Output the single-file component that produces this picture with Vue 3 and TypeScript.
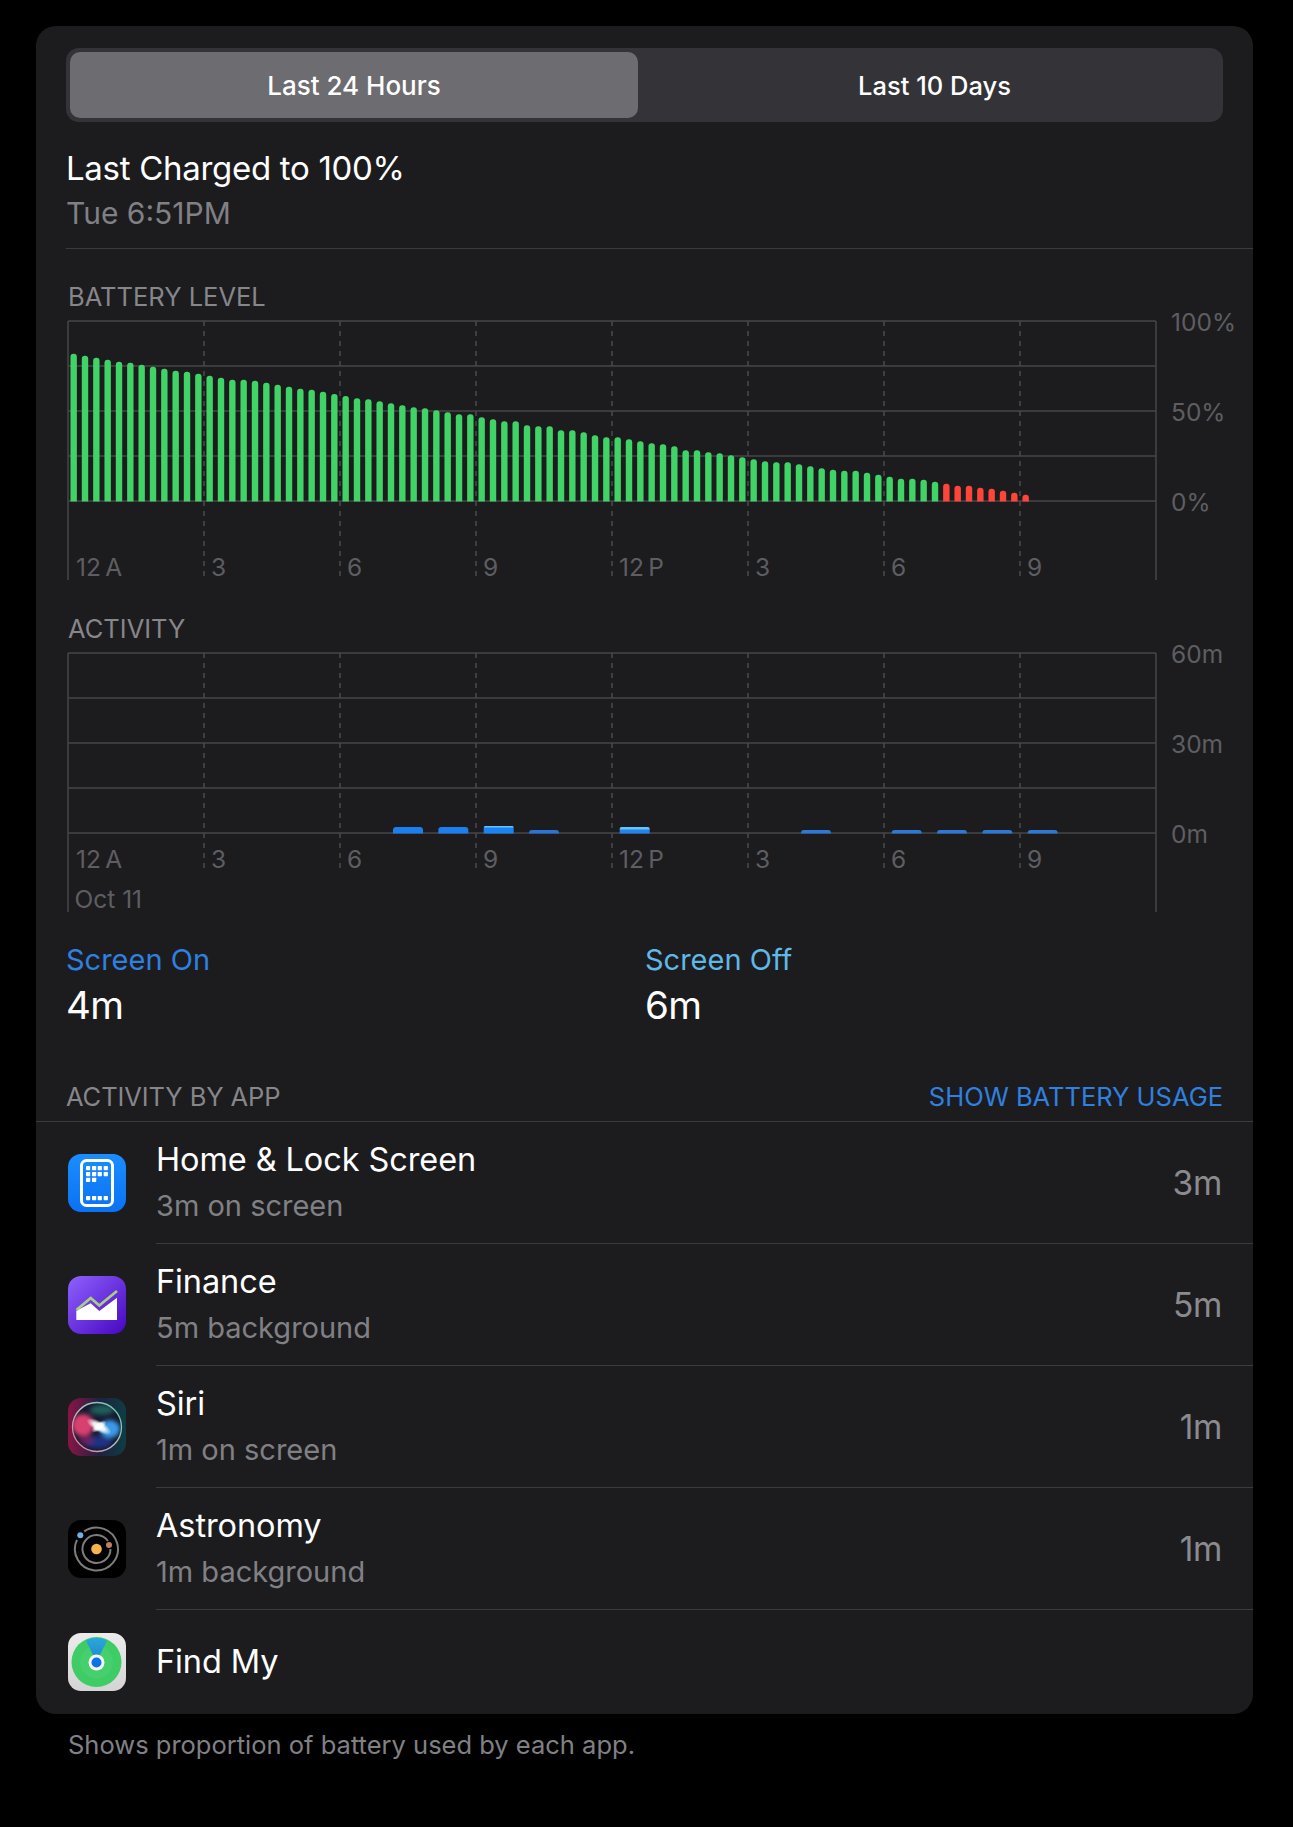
<script setup lang="ts">
interface Bar { x: number; w: number; h: number; fill: string; off: number }
interface Chart {
  label: string
  yLabels: { text: string; line: number }[]
  xLabels: { text: string; x: number }[]
  note?: string
  labelY: number
  dashEnd: number
  bars: Bar[]
}

const ORIGIN_X = 2
const TOP = 15
const STEP = 45
const BASE = TOP + STEP * 4
const COL = 136

const levels = [
  147.7, 145.7, 143.7, 141.7, 139.7, 138.7, 136.7, 134.7, 132.7, 130.7, 129.7, 127.7, 125.7, 123.7, 121.7,
  121.7, 120.7, 118.7, 116.7, 114.7, 112.7, 111.7, 109.7, 107.5, 105.5, 103.3, 102.3, 100.3, 98.3, 96.3,
  94.3, 93.3, 91.3, 89.3, 87.3, 87.3, 84.3, 82.3, 80.3, 80.3, 76.3, 75.3, 75.3, 71.3, 71.3,
  69.3, 66.3, 64.3, 64.3, 62.3, 60.3, 58.3, 57.3, 55.3, 51.3, 51.3, 49.3, 48.3, 46.3, 44.3,
  42.3, 40.3, 39.3, 39.3, 37.3, 35.3, 33.3, 31.7, 30.7, 30.7, 28.7, 26.7, 24.7, 22.7, 22.7,
  21.7, 19.7, 17.7, 15.7, 15.7, 13.7, 12.7, 10.7, 8.7, 6.7
]

const batteryBars: Bar[] = levels.map((h, i) => ({
  x: ORIGIN_X + (COL / 12) * i + 2.47,
  w: 6.4,
  h,
  fill: i >= 77 ? '#ff453a' : '#40d366',
  off: 0
}))

const activity: [number, number, string, number][] = [
  [7, 6.5, '#1b7ff0', 0],
  [8, 6.5, '#1b7ff0', 0],
  [9, 7.5, '#1b84f5', 1.5],
  [10, 3.5, '#2a74d4', 0],
  [12, 6.5, '#2484ea', 2.5],
  [16, 3.5, '#2f78d6', 0],
  [18, 3.5, '#2f78d6', 0],
  [19, 3.5, '#2f78d6', 0],
  [20, 3.5, '#2f78d6', 0],
  [21, 3.5, '#2f78d6', 0]
]

const activityBars: Bar[] = activity.map(([i, h, fill, off]) => ({
  x: ORIGIN_X + (COL / 3) * i + 7.67,
  w: 30,
  h,
  fill,
  off
}))

const hours = ['12\u2009A', '3', '6', '9', '12\u2009P', '3', '6', '9']
const xLabels = hours.map((text, i) => ({ text, x: ORIGIN_X + COL * i + (i === 0 ? 8 : 7) }))
const verticals = hours.map((_, i) => ORIGIN_X + COL * i).slice(1)
const rightEdge = ORIGIN_X + COL * 8

const charts: Chart[] = [
  {
    label: 'BATTERY LEVEL',
    yLabels: [
      { text: '100%', line: 0 },
      { text: '50%', line: 2 },
      { text: '0%', line: 4 }
    ],
    xLabels,
    labelY: 270,
    dashEnd: 271,
    bars: batteryBars
  },
  {
    label: 'ACTIVITY',
    yLabels: [
      { text: '60m', line: 0 },
      { text: '30m', line: 2 },
      { text: '0m', line: 4 }
    ],
    xLabels,
    note: 'Oct 11',
    labelY: 230,
    dashEnd: 230,
    bars: activityBars
  }
]

function topRounded(x: number, w: number, h: number, base: number, maxR: number): string {
  const r = Math.min(maxR, h)
  const y = base - h
  return `M${x} ${base}V${y + r}A${r} ${r} 0 0 1 ${x + r} ${y}H${x + w - r}A${r} ${r} 0 0 1 ${x + w} ${y + r}V${base}Z`
}

const apps = [
  { name: 'Home & Lock Screen', sub: '3m on screen', time: '3m', icon: 'home' },
  { name: 'Finance', sub: '5m background', time: '5m', icon: 'finance' },
  { name: 'Siri', sub: '1m on screen', time: '1m', icon: 'siri' },
  { name: 'Astronomy', sub: '1m background', time: '1m', icon: 'astronomy' },
  { name: 'Find My', sub: '', time: '', icon: 'findmy' }
]

const homeDots = [
  [18, 12], [24, 12], [29.7, 12], [35.7, 12],
  [18, 18], [24, 18], [29.7, 18], [35.7, 18],
  [18, 23.7], [24, 23.7],
  [18, 42], [24, 42], [29.7, 42], [35.7, 42]
]
</script>

<template>
  <div class="page">
    <div class="card">
      <div class="segmented">
        <div class="seg seg-on">Last 24 Hours</div>
        <div class="seg seg-off">Last 10 Days</div>
      </div>

      <div class="charged">
        <div class="charged-title">Last Charged to 100%</div>
        <div class="charged-sub">Tue 6:51PM</div>
      </div>

      <section v-for="chart in charts" :key="chart.label" class="chart">
        <div class="chart-label">{{ chart.label }}</div>
        <svg class="chart-svg" width="1187" height="276" viewBox="0 0 1187 276">
          <line
            v-for="n in 5"
            :key="'h' + n"
            class="grid"
            :x1="ORIGIN_X"
            :x2="rightEdge"
            :y1="TOP + STEP * (n - 1)"
            :y2="TOP + STEP * (n - 1)"
          />
          <line class="grid" :x1="ORIGIN_X" :x2="ORIGIN_X" :y1="TOP" y2="274" />
          <line class="grid" :x1="rightEdge" :x2="rightEdge" :y1="TOP" y2="274" />
          <line
            v-for="x in verticals"
            :key="'v' + x"
            class="dash"
            :x1="x"
            :x2="x"
            :y1="TOP"
            :y2="chart.dashEnd"
          />
          <template v-for="bar in chart.bars" :key="bar.x">
            <path :d="topRounded(bar.x, bar.w, bar.h, BASE + 0.5, 3)" :fill="bar.fill" />
            <path
              v-if="bar.off"
              :d="topRounded(bar.x, bar.w, bar.off, BASE + 0.5 - bar.h + bar.off, 2)"
              fill="#64c4fb"
            />
          </template>
          <text
            v-for="t in chart.xLabels"
            :key="'x' + t.x"
            class="axis"
            :x="t.x"
            :y="chart.labelY"
          >{{ t.text }}</text>
          <text v-if="chart.note" class="axis" x="8.5" y="270">{{ chart.note }}</text>
          <text
            v-for="t in chart.yLabels"
            :key="t.text"
            class="axis"
            x="1105"
            :y="TOP + STEP * t.line + 10"
          >{{ t.text }}</text>
        </svg>
      </section>

      <div class="stats">
        <div class="stat">
          <div class="stat-label on">Screen On</div>
          <div class="stat-value">4m</div>
        </div>
        <div class="stat">
          <div class="stat-label off">Screen Off</div>
          <div class="stat-value">6m</div>
        </div>
      </div>

      <div class="by-app">
        <span class="by-app-title">ACTIVITY BY APP</span>
        <span class="by-app-link">SHOW BATTERY USAGE</span>
      </div>

      <div v-for="(app, i) in apps" :key="app.name" class="row" :class="{ last: i === apps.length - 1 }">
        <svg class="icon" width="58" height="58" viewBox="0 0 58 58">
          <defs v-if="i === 0">
            <linearGradient id="g-home" x1="0" y1="0" x2="0" y2="1">
              <stop offset="0" stop-color="#1a8dff" />
              <stop offset="1" stop-color="#0a72f3" />
            </linearGradient>
            <linearGradient id="g-fin" x1="0" y1="0" x2="1" y2="1">
              <stop offset="0" stop-color="#8e62ff" />
              <stop offset="1" stop-color="#4706c0" />
            </linearGradient>
            <linearGradient id="g-siri-l" x1="0" y1="0" x2="1" y2="0">
              <stop offset="0" stop-color="#8a1446" />
              <stop offset="0.55" stop-color="#1f2140" />
              <stop offset="1" stop-color="#0e3d44" />
            </linearGradient>
            <linearGradient id="g-ring" x1="0" y1="1" x2="1" y2="0">
              <stop offset="0" stop-color="#d8708f" />
              <stop offset="0.5" stop-color="#b4c6c8" />
              <stop offset="1" stop-color="#5fc8aa" />
            </linearGradient>
            <radialGradient id="g-star" cx="0.5" cy="0.5" r="0.5">
              <stop offset="0" stop-color="#ffffff" />
              <stop offset="0.45" stop-color="#ffffff" stop-opacity="0.9" />
              <stop offset="1" stop-color="#ffffff" stop-opacity="0" />
            </radialGradient>
            <linearGradient id="g-my-bg" x1="0" y1="0" x2="0" y2="1">
              <stop offset="0" stop-color="#ececec" />
              <stop offset="1" stop-color="#d4d4d4" />
            </linearGradient>
            <linearGradient id="g-my-beam" x1="0" y1="0" x2="0" y2="1">
              <stop offset="0" stop-color="#2ba7dc" />
              <stop offset="1" stop-color="#1a86cc" />
            </linearGradient>
            <filter id="f-blur" x="-30%" y="-30%" width="160%" height="160%">
              <feGaussianBlur stdDeviation="1.9" />
            </filter>
            <clipPath id="c-siri">
              <circle cx="29" cy="29" r="24" />
            </clipPath>
          </defs>

          <template v-if="app.icon === 'home'">
            <rect width="58" height="58" rx="13" fill="url(#g-home)" />
            <rect x="13.5" y="6.5" width="31" height="45" rx="5" fill="none" stroke="#fff" stroke-width="3" />
            <rect v-for="d in homeDots" :key="d.join()" :x="d[0]" :y="d[1]" width="4.2" height="4.2" rx="0.6" fill="#fff" />
          </template>

          <template v-else-if="app.icon === 'finance'">
            <rect width="58" height="58" rx="13" fill="url(#g-fin)" />
            <polygon points="8.3,44 8.3,34.7 22.7,27.3 31.3,35 49,21.7 49,44" fill="#fff" />
            <polyline points="8.5,34 22.7,22 31.3,29.5 49,15" fill="none" stroke="#a9cf7e" stroke-width="2.8" />
          </template>

          <template v-else-if="app.icon === 'siri'">
            <rect width="58" height="58" rx="13" fill="url(#g-siri-l)" />
            <circle cx="29" cy="29" r="24.5" fill="#151a30" />
            <g clip-path="url(#c-siri)">
              <g filter="url(#f-blur)">
                <ellipse cx="15" cy="27" rx="11" ry="11" fill="#d8406f" />
                <ellipse cx="42" cy="31" rx="10" ry="9" fill="#3a9ae8" />
                <ellipse cx="30" cy="44" rx="14" ry="6" fill="#2338a0" opacity="0.75" />
                <ellipse cx="34" cy="12" rx="12" ry="5" fill="#2a8a78" opacity="0.6" />
                <ellipse cx="18" cy="42" rx="7" ry="5" fill="#8a1f5e" opacity="0.7" />
              </g>
            </g>
            <ellipse cx="31" cy="28.5" rx="14" ry="5.5" fill="url(#g-star)" transform="rotate(30 31 28.5)" />
            <ellipse cx="31" cy="28.5" rx="9" ry="4" fill="url(#g-star)" transform="rotate(-35 31 28.5)" />
            <circle cx="29" cy="29" r="24.5" fill="none" stroke="url(#g-ring)" stroke-width="1.3" />
          </template>

          <template v-else-if="app.icon === 'astronomy'">
            <rect width="58" height="58" rx="13" fill="#000" />
            <path d="M16.2 11.4A21.5 21.5 0 1 1 9 19.9" fill="none" stroke="#7d7d7d" stroke-width="2" />
            <path d="M42.5 29A14 14 0 1 1 40 21" fill="none" stroke="#7d7d7d" stroke-width="2" />
            <circle cx="28.5" cy="29" r="5.3" fill="#f5b44c" />
            <circle cx="12.3" cy="15.3" r="3" fill="#6fb2e2" />
            <circle cx="41" cy="25" r="3" fill="#c27d64" />
          </template>

          <template v-else>
            <rect width="58" height="58" rx="13" fill="url(#g-my-bg)" />
            <circle cx="28.5" cy="29" r="25" fill="#3dcc66" />
            <circle cx="28.5" cy="29" r="16.5" fill="#46cf6d" />
            <path d="M28.5 29L18 7.5A25 25 0 0 1 39 7.5Z" fill="url(#g-my-beam)" />
            <circle cx="28.5" cy="29.5" r="8" fill="#f4f8f6" />
            <circle cx="28.5" cy="29.5" r="5" fill="#0b72ea" />
          </template>
        </svg>
        <div class="row-body">
          <div class="row-text">
            <div class="row-name">{{ app.name }}</div>
            <div v-if="app.sub" class="row-sub">{{ app.sub }}</div>
          </div>
          <div v-if="app.time" class="row-time">{{ app.time }}</div>
        </div>
      </div>
    </div>
    <div class="footer">Shows proportion of battery used by each app.</div>
  </div>
</template>

<style>
html, body { margin: 0; background: #000; }
</style>

<style scoped>
.page {
  box-sizing: border-box;
  width: 1293px;
  height: 1827px;
  padding: 26px 40px 0 36px;
  background: #000;
  color: #fff;
  font-family: Inter, "Noto Sans", "Liberation Sans", sans-serif;
}
.card {
  width: 1217px;
  height: 1688px;
  padding-top: 22px;
  box-sizing: border-box;
  background: #1c1c1e;
  border-radius: 20px;
  overflow: hidden;
}
.segmented {
  display: grid;
  grid-template-columns: 568px 1fr;
  margin: 0 30px;
  height: 74px;
  padding: 4px;
  box-sizing: border-box;
  background: #343438;
  border-radius: 13px;
}
.seg {
  display: flex;
  align-items: center;
  justify-content: center;
  font-size: 26px;
}
.seg-on {
  background: #6c6c71;
  border-radius: 10px;
  font-weight: 500;
}
.seg-off {
  padding-left: 12px;
  font-size: 25.5px;
  font-weight: 450;
}
.charged {
  margin-left: 30px;
  height: 127px;
  box-sizing: border-box;
  padding-top: 26px;
  border-bottom: 1px solid #3b3b3e;
}
.charged-title {
  font-size: 33px;
  line-height: 40px;
  letter-spacing: -0.3px;
}
.charged-sub {
  margin-top: 6px;
  font-size: 30px;
  line-height: 38px;
  color: #808085;
}
.chart {
  margin-left: 30px;
}
.chart:first-of-type .chart-label {
  margin-top: 39px;
}
.chart + .chart .chart-label {
  margin-top: 38px;
}
.chart-label {
  padding-left: 2px;
  font-size: 25.5px;
  line-height: 18px;
  color: #86868b;
}
.chart-svg {
  display: block;
}
.grid {
  stroke: #464648;
  stroke-width: 1.5;
}
.dash {
  stroke: #4a4a4c;
  stroke-width: 1.5;
  stroke-dasharray: 5 5;
}
.axis {
  font-size: 24.5px;
  fill: #5e5e62;
}
.stats {
  display: grid;
  grid-template-columns: 579px 1fr;
  margin: 28px 30px 0;
}
.stat-label {
  font-size: 29px;
  line-height: 36px;
}
.stat-label.on { color: #2f80e0; }
.stat-label.off { color: #5fb8e6; }
.stat-value {
  margin-top: 3px;
  font-size: 38.5px;
  line-height: 48px;
  letter-spacing: -0.5px;
}
.by-app {
  display: flex;
  justify-content: space-between;
  align-items: center;
  margin-top: 53px;
  padding: 0 30px 10px;
  height: 40px;
  box-sizing: border-box;
  border-bottom: 1px solid #3b3b3e;
  font-size: 25.5px;
  line-height: 30px;
}
.by-app-title {
  color: #86868b;
  letter-spacing: -0.1px;
}
.by-app-link { color: #2f80e0; }
.row {
  display: flex;
  align-items: center;
  height: 122px;
  padding-left: 32px;
}
.row.last {
  height: 103px;
}
.icon {
  flex: none;
  display: block;
}
.row-body {
  flex: 1;
  align-self: stretch;
  display: flex;
  align-items: center;
  justify-content: space-between;
  margin-left: 30px;
  padding-right: 31px;
  border-bottom: 1px solid #3b3b3e;
}
.row.last .row-body {
  border-bottom: none;
}
.row-name {
  font-size: 32.5px;
  line-height: 40px;
  letter-spacing: -0.1px;
}
.row-sub {
  margin-top: 7px;
  font-size: 29px;
  line-height: 38px;
  color: #808085;
}
.row-time {
  font-size: 33.5px;
  color: #8a8a8f;
  letter-spacing: -0.3px;
}
.footer {
  margin: 15px 0 0 32px;
  font-size: 25.5px;
  line-height: 32px;
  color: #808085;
}
</style>
